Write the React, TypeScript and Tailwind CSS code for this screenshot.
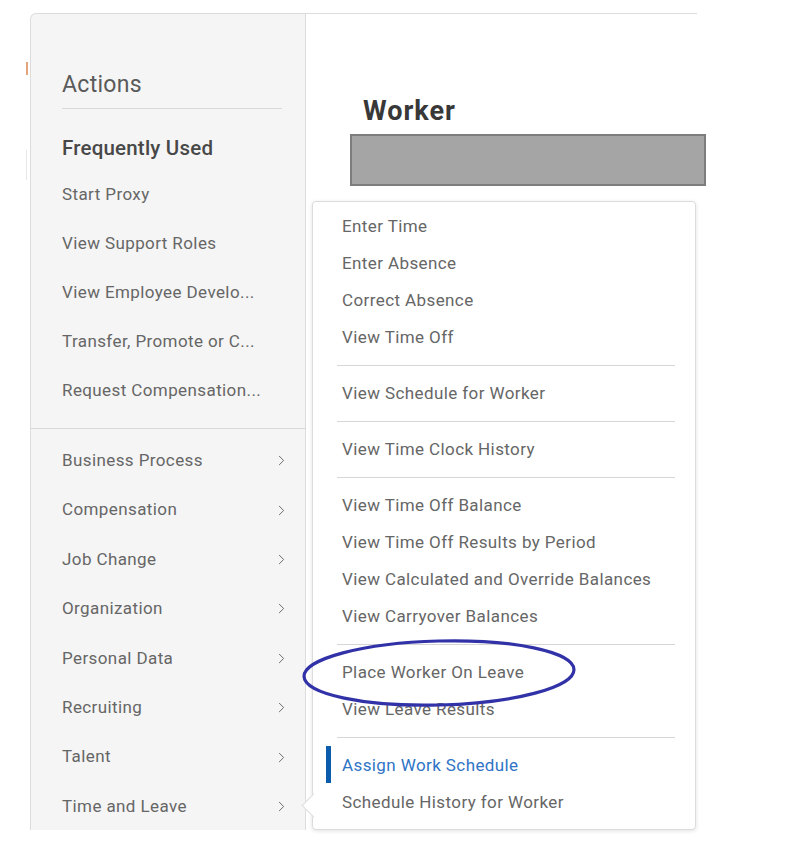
import { ChevronRight } from "lucide-react";

const frequent = [
  "Start Proxy",
  "View Support Roles",
  "View Employee Develo...",
  "Transfer, Promote or C...",
  "Request Compensation...",
];

const categories = [
  "Business Process",
  "Compensation",
  "Job Change",
  "Organization",
  "Personal Data",
  "Recruiting",
  "Talent",
  "Time and Leave",
];

type MenuItem = { label: string; active?: boolean };

const menuGroups: MenuItem[][] = [
  [
    { label: "Enter Time" },
    { label: "Enter Absence" },
    { label: "Correct Absence" },
    { label: "View Time Off" },
  ],
  [{ label: "View Schedule for Worker" }],
  [{ label: "View Time Clock History" }],
  [
    { label: "View Time Off Balance" },
    { label: "View Time Off Results by Period" },
    { label: "View Calculated and Override Balances" },
    { label: "View Carryover Balances" },
  ],
  [{ label: "Place Worker On Leave" }, { label: "View Leave Results" }],
  [{ label: "Assign Work Schedule", active: true }, { label: "Schedule History for Worker" }],
];

function ActionsPanel() {
  return (
    <div className="w-[276px] h-[817px] shrink-0 border-l border-t border-r border-[#dcdcdc] bg-[#f5f5f5] rounded-tl-[6px]">
      <div className="pl-[31px] pr-[23px] pt-[57px]">
        <h2 className="text-[23px] leading-[28px] tracking-[0.3px] text-[#5a5a5a]">Actions</h2>
        <div className="mt-[9px] h-px bg-[#d8d8d8]" />
        <h3 className="mt-[27px] text-[20.5px] leading-[24px] tracking-[0.2px] font-medium text-[#484848]">
          Frequently Used
        </h3>
        <ul className="mt-[10px]">
          {frequent.map((item) => (
            <li
              key={item}
              className="h-[49px] flex items-center text-[17px] tracking-[0.4px] text-[#666]"
            >
              {item}
            </li>
          ))}
        </ul>
      </div>
      <div className="mt-[13px] mb-[7px] h-px bg-[#d8d8d8]" />
      <ul className="pl-[31px] pr-[15px]">
        {categories.map((item) => (
          <li
            key={item}
            className="h-[49.4px] flex items-center justify-between text-[17px] tracking-[0.4px] text-[#666]"
          >
            <span>{item}</span>
            <ChevronRight className="w-[17px] h-[17px] text-[#6a6a6a]" strokeWidth={1.4} />
          </li>
        ))}
      </ul>
    </div>
  );
}

function SubMenu() {
  return (
    <div className="absolute left-[312px] top-[201px] w-[384px] h-[629px] bg-white border border-[#dcdcdc] rounded-[4px] shadow-[0_1px_4px_rgba(0,0,0,0.12)] pt-[6px]">
      {menuGroups.map((group, gi) => (
        <div key={gi}>
          {gi > 0 && <div className="ml-[24px] mr-[20px] my-[9px] h-px bg-[#d6d6d6]" />}
          {group.map((item) => (
            <div
              key={item.label}
              className="relative h-[37px] flex items-center pl-[29px] text-[17px] tracking-[0.4px]"
            >
              {item.active && (
                <span className="absolute left-[13px] top-[-1px] w-[5px] h-[37px] bg-[#0b5cad]" />
              )}
              <span className={item.active ? "text-[#2f74c6]" : "text-[#666]"}>{item.label}</span>
            </div>
          ))}
        </div>
      ))}
      <span className="absolute left-[-8px] top-[595px] w-[17px] h-[17px] rotate-45 bg-white border-l border-b border-[#dcdcdc]" />
    </div>
  );
}

export default function App() {
  return (
    <div
      className="relative w-[800px] h-[868px] bg-white overflow-hidden"
      style={{ fontFamily: "Roboto, 'Liberation Sans', sans-serif" }}
    >
      <span className="absolute left-[26px] top-[62px] w-[2px] h-[13px] bg-[#e3a47e]" />
      <span className="absolute left-[26px] top-[150px] w-px h-[30px] bg-[#e6e6e6]" />
      <div className="flex pt-[13px] pl-[30px]">
        <ActionsPanel />
        <div className="w-[391px] border-t border-[#dcdcdc] h-[200px]">
          <div className="pl-[57px] pt-[83px]">
            <h1 className="text-[27px] leading-[28px] tracking-[1px] font-bold text-[#383838]">Worker</h1>
          </div>
          <div className="ml-[44px] mt-[9px] w-[356px] h-[52px] bg-[#a5a5a5] border-2 border-[#7d7d7d]" />
        </div>
      </div>
      <SubMenu />
      <svg
        className="absolute left-[298px] top-[634px] pointer-events-none"
        width="282"
        height="80"
        viewBox="0 0 282 80"
      >
        <ellipse
          cx="141"
          cy="39"
          rx="135"
          ry="32"
          fill="none"
          stroke="#3232a8"
          strokeWidth="3.2"
          transform="rotate(-1.5 141 39)"
        />
      </svg>
    </div>
  );
}
